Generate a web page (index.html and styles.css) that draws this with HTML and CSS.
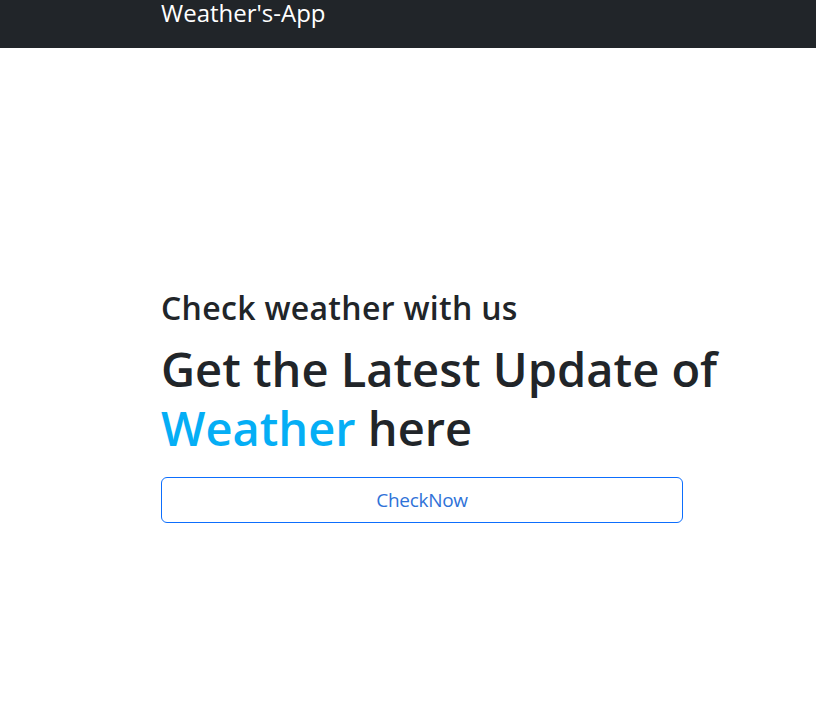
FILE: index.html
```html
<!DOCTYPE html>
<html lang="en">
<head>
<meta charset="utf-8">
<title>Weather's-App</title>
<link rel="stylesheet" href="styles.css">
</head>
<body>
<nav class="navbar">
  <div class="nav-inner">
    <a class="brand" href="#">Weather's-App</a>
  </div>
</nav>
<main class="hero">
  <div class="hero-inner">
    <h3 class="lead-title">Check weather with us</h3>
    <h1 class="big-title">Get the Latest Update of <span class="accent">Weather</span> here</h1>
    <button class="btn-check" type="button">CheckNow</button>
  </div>
</main>
</body>
</html>
```
FILE: styles.css
```css
* { box-sizing: border-box; }
html, body { margin: 0; padding: 0; }
body {
  font-family: "Open Sans", "Noto Sans", sans-serif;
  color: #212529;
  background: #fff;
}
.navbar {
  background: #212529;
  height: 48px;
}
.nav-inner {
  padding-left: 161px;
}
.brand {
  display: block;
  color: #fff;
  text-decoration: none;
  font-size: 24px;
  line-height: 26px;
  padding-top: 0;
}
.hero {
  padding-top: 240px;
}
.hero-inner {
  margin-left: 161px;
  width: 600px;
  display: flex;
  flex-direction: column;
  align-items: flex-start;
}
.lead-title {
  margin: 0;
  font-size: 32px;
  font-weight: 600;
  line-height: 40px;
  letter-spacing: 0.3px;
}
.big-title {
  margin: 12px 0 0;
  font-size: 47px;
  font-weight: 600;
  line-height: 59px;
}
.accent { color: #05aef5; }
.btn-check {
  margin-top: 19px;
  width: 522px;
  height: 46px;
  border: 1px solid #0d6efd;
  border-radius: 6px;
  background: #fff;
  color: #2f72d8;
  font-family: inherit;
  font-size: 19px;
  letter-spacing: -0.3px;
}
```
